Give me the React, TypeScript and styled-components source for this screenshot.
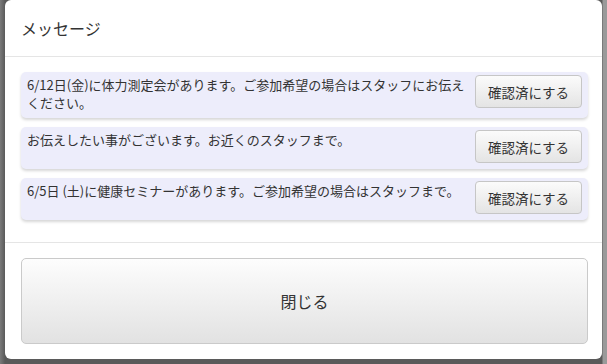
import React from 'react';
import styled, { createGlobalStyle } from 'styled-components';

const GlobalStyle = createGlobalStyle`
  html, body {
    margin: 0;
    padding: 0;
    background: #606060;
  }
  body {
    font-family: "Noto Sans CJK JP", "Noto Sans", sans-serif;
    color: #333;
  }
`;

const Backdrop = styled.div`
  width: 607px;
  height: 364px;
  overflow: hidden;
  background: linear-gradient(to right, #7a7a7a 0, #5a5a5a 5px, #5a5a5a 602px, #9a9a9a 603px);
`;

const Dialog = styled.div`
  margin: 0 5px;
  width: 597px;
  height: 359px;
  background: #fff;
  border-radius: 6px;
  display: flex;
  flex-direction: column;
  box-sizing: border-box;
`;

const Header = styled.div`
  height: 56px;
  border-bottom: 1px solid #e5e5e5;
  display: flex;
  align-items: center;
  padding: 0 16px;
`;

const Title = styled.h3`
  margin: 0;
  font-size: 16px;
  font-weight: 400;
  color: #333;
`;

const Body = styled.div`
  padding: 15px 14px 0 16px;
  height: 186px;
  box-sizing: border-box;
  border-bottom: 1px solid #e5e5e5;
  display: flex;
  flex-direction: column;
  gap: 9px;
`;

const Card = styled.div`
  background: #ededfb;
  border-radius: 5px;
  box-shadow: 0 2px 3px rgba(0, 0, 0, 0.16);
  padding: 3px 6px 6px 6px;
  display: flex;
  align-items: flex-start;
  gap: 4px;
`;

const Text = styled.p`
  flex: 1;
  margin: 1px 0 0;
  font-size: 13px;
  line-height: 18px;
  color: #333;
`;

const ConfirmButton = styled.button`
  flex: none;
  width: 107px;
  height: 33px;
  border: 1px solid #c6c6c6;
  border-radius: 4px;
  background: linear-gradient(#fbfbfb, #e4e4e4);
  font-family: inherit;
  font-size: 13.5px;
  color: #333;
  padding: 0;
`;

const Footer = styled.div`
  flex: 1;
  padding: 15px 14px 0 16px;
`;

const CloseButton = styled.button`
  width: 100%;
  height: 86px;
  border: 1px solid #cacaca;
  border-radius: 5px;
  background: linear-gradient(#fdfdfd, #e2e2e2);
  font-family: inherit;
  font-size: 16px;
  color: #333;
`;

const messages = [
  '6/12日(金)に体力測定会があります。ご参加希望の場合はスタッフにお伝えください。',
  'お伝えしたい事がございます。お近くのスタッフまで。',
  '6/5日 (土)に健康セミナーがあります。ご参加希望の場合はスタッフまで。',
];

const App: React.FC = () => {
  return (
    <Backdrop>
      <GlobalStyle />
      <Dialog>
        <Header>
          <Title>メッセージ</Title>
        </Header>
        <Body>
          {messages.map((m) => (
            <Card key={m}>
              <Text>{m}</Text>
              <ConfirmButton>確認済にする</ConfirmButton>
            </Card>
          ))}
        </Body>
        <Footer>
          <CloseButton>閉じる</CloseButton>
        </Footer>
      </Dialog>
    </Backdrop>
  );
};

export default App;
